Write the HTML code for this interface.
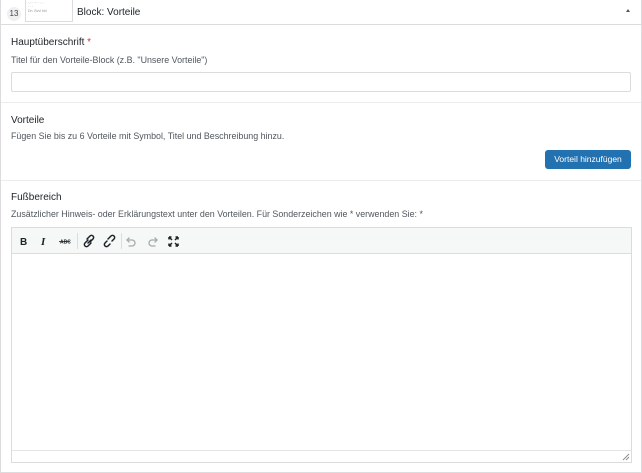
<!DOCTYPE html>
<html><head><style>
*{box-sizing:border-box;margin:0;padding:0}
body{width:642px;height:473px;background:#fff;font-family:"Liberation Sans",Arial,sans-serif;position:relative;overflow:hidden;color:#1d2327}
.abs{position:absolute}
.t{font-size:10px;color:#1d2327}
.d{font-size:8.9px;color:#50575e}
</style></head><body>
<div class="abs" style="left:0;top:0;width:642px;height:473px;border:1px solid #dcdcde;border-top:none"></div>
<div class="abs" style="left:0;top:24px;width:642px;height:1px;background:#dcdcde"></div>
<div class="abs" style="left:7px;top:7px;width:14px;height:14px;border-radius:50%;background:#f0f0f1;font-size:8px;color:#3c434a;text-align:center;line-height:14px">13</div>
<div class="abs" style="left:25px;top:0;width:48px;height:22px;border:1px solid #dcdcde;border-top:none;background:#fff;font-size:3.5px;color:#999;line-height:4px;padding:1px 2px">·-·· ··· ·  ·-·<br>·  ·  ·<br>Dn. Bvvl bbl<br>·</div>
<div class="abs t" style="left:77px;top:7px;font-size:10px">Block: Vorteile</div>
<div class="abs" style="left:626px;top:9px;width:0;height:0;border-left:2px solid transparent;border-right:2px solid transparent;border-bottom:3px solid #50575e"></div>

<div class="abs t" style="left:11px;top:37px">Hauptüberschrift <span style="color:#d63638">*</span></div>
<div class="abs d" style="left:11px;top:55px">Titel für den Vorteile-Block (z.B. "Unsere Vorteile")</div>
<div class="abs" style="left:11px;top:72px;width:620px;height:20px;border:1px solid #dcdcde;border-radius:2px"></div>
<div class="abs" style="left:1px;top:102px;width:640px;height:1px;background:#ececec"></div>

<div class="abs t" style="left:11px;top:115px">Vorteile</div>
<div class="abs d" style="left:11px;top:131px">Fügen Sie bis zu 6 Vorteile mit Symbol, Titel und Beschreibung hinzu.</div>
<div class="abs" style="left:545px;top:150px;width:86px;height:19px;background:#2271b1;border-radius:3px;color:#fff;font-size:8.5px;text-align:center;line-height:19px">Vorteil hinzufügen</div>
<div class="abs" style="left:1px;top:180px;width:640px;height:1px;background:#ececec"></div>

<div class="abs t" style="left:11px;top:192px">Fußbereich</div>
<div class="abs d" style="left:11px;top:209px">Zusätzlicher Hinweis- oder Erklärungstext unter den Vorteilen. Für Sonderzeichen wie * verwenden Sie: *</div>
<div class="abs" style="left:11px;top:227px;width:621px;height:236px;border:1px solid #dcdcde"></div>
<div class="abs" style="left:12px;top:228px;width:619px;height:26px;background:#f6f7f7;border-bottom:1px solid #dcdcde"></div>
<div class="abs" style="left:12px;top:450px;width:619px;height:12px;border-top:1px solid #e5e5e5"></div>
<div class="abs" style="left:77px;top:233px;width:1px;height:16px;background:#dcdcde"></div>
<div class="abs" style="left:121px;top:233px;width:1px;height:16px;background:#dcdcde"></div>
<svg class="abs" style="left:12px;top:228px" width="200" height="26" viewBox="0 0 200 26">
<text x="8" y="17" font-family="Liberation Sans" font-weight="bold" font-size="10" fill="#1d2327">B</text>
<text x="29" y="17" font-family="Liberation Serif" font-style="italic" font-weight="bold" font-size="11" fill="#1d2327">I</text>
<text x="48" y="15.5" font-family="Liberation Sans" font-size="5" font-weight="bold" fill="#1d2327">ABC</text>
<line x1="47" y1="13.5" x2="58" y2="13.5" stroke="#1d2327" stroke-width="0.8"/>
<g fill="none" stroke="#1d2327" stroke-width="1.5" stroke-linecap="round">
<path d="M75 11 l3-3 a2 2 0 0 1 3 3 l-3 3"/><path d="M79 15 l-3 3 a2 2 0 0 1 -3 -3 l3 -3"/><path d="M76 15 l3 -3"/>
<path d="M96 11 l3-3 a2 2 0 0 1 3 3 l-2 2"/><path d="M98 16 l-2 2 a2 2 0 0 1 -3 -3 l2 -2"/>
</g>
<g fill="none" stroke="#a7aaad" stroke-width="1.3" stroke-linecap="round">
<path d="M115 12 h5 a3 3 0 0 1 0 6 h-3"/><path d="M117 10 l-2 2 l2 2"/>
<path d="M145 12 h-5 a3 3 0 0 0 0 6 h3"/><path d="M143 10 l2 2 l-2 2"/>
</g>
<g fill="none" stroke="#1d2327" stroke-width="1.5">
<path d="M157 9 l3 3 M157 9 h2.5 M157 9 v2.5"/><path d="M166 9 l-3 3 M166 9 h-2.5 M166 9 v2.5"/>
<path d="M157 18 l3 -3 M157 18 h2.5 M157 18 v-2.5"/><path d="M166 18 l-3 -3 M166 18 h-2.5 M166 18 v-2.5"/>
</g>
</svg>
<svg class="abs" style="left:622px;top:453px" width="8" height="8"><path d="M7 1 L1 7 M7 4 L4 7" stroke="#8c8f94" stroke-width="1"/></svg>
</body></html>
